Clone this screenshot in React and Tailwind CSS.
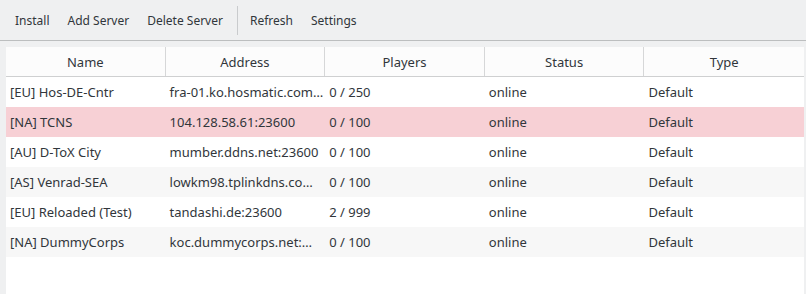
const servers = [
  { name: "[EU] Hos-DE-Cntr", address: "fra-01.ko.hosmatic.com…", players: "0 / 250", status: "online", type: "Default" },
  { name: "[NA] TCNS", address: "104.128.58.61:23600", players: "0 / 100", status: "online", type: "Default" },
  { name: "[AU] D-ToX City", address: "mumber.ddns.net:23600", players: "0 / 100", status: "online", type: "Default" },
  { name: "[AS] Venrad-SEA", address: "lowkm98.tplinkdns.co…", players: "0 / 100", status: "online", type: "Default" },
  { name: "[EU] Reloaded (Test)", address: "tandashi.de:23600", players: "2 / 999", status: "online", type: "Default" },
  { name: "[NA] DummyCorps", address: "koc.dummycorps.net:…", players: "0 / 100", status: "online", type: "Default" },
];

const columns = ["Name", "Address", "Players", "Status", "Type"];

function ToolButton({ label }) {
  return (
    <button className="px-[9px] pt-[2px] h-[30px] text-[12px] text-[#31363b] rounded hover:bg-[#dfe1e3]">
      {label}
    </button>
  );
}

export default function App() {
  const selected = 1;

  return (
    <main
      className="w-[806px] h-[294px] bg-[#eff0f1] flex flex-col overflow-hidden text-[#31363b]"
      style={{ fontFamily: '"Noto Sans", "Open Sans", sans-serif' }}
    >
      <div className="h-[41px] shrink-0 flex items-center pl-[6px] border-b border-[#bcbebf]">
        <ToolButton label="Install" />
        <ToolButton label="Add Server" />
        <ToolButton label="Delete Server" />
        <div className="w-px h-[29px] bg-[#c9cbcd] ml-[5px] mr-[3px]" />
        <ToolButton label="Refresh" />
        <ToolButton label="Settings" />
      </div>

      <div className="flex-1 pt-[6px] pl-[6px] pr-[2px]">
        <div className="h-full bg-white flex flex-col">
          <div className="grid grid-cols-5 h-[30px] bg-[#fcfcfc] border-b border-[#cfd0d1]">
            {columns.map((c, i) => (
              <div
                key={c}
                className={`flex items-center justify-center pt-[2px] text-[13px] ${i < 4 ? "border-r border-[#d6d7d8]" : ""}`}
              >
                {c}
              </div>
            ))}
          </div>
          {servers.map((s, i) => (
            <div
              key={s.name}
              className={`grid grid-cols-5 h-[30px] text-[13px] ${
                i === selected ? "bg-[#f7d0d5]" : i % 2 === 1 ? "bg-[#f7f7f7]" : "bg-white"
              }`}
            >
              {[s.name, s.address, s.players, s.status, s.type].map((v, j) => (
                <div key={j} className="flex items-center pl-[4px] pt-[2px] whitespace-nowrap overflow-hidden">
                  {v}
                </div>
              ))}
            </div>
          ))}
        </div>
      </div>
    </main>
  );
}
